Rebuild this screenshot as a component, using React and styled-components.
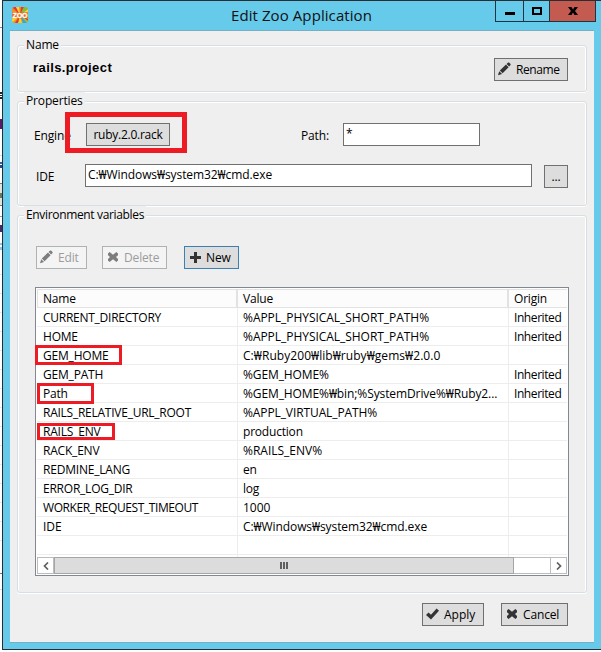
import React from 'react'
import styled, { createGlobalStyle, css } from 'styled-components'

const variables = [
    { name: 'CURRENT_DIRECTORY', value: '%APPL_PHYSICAL_SHORT_PATH%', origin: 'Inherited', nameLs: -0.26, valueLs: -0.04 },
    { name: 'HOME', value: '%APPL_PHYSICAL_SHORT_PATH%', origin: 'Inherited', valueLs: -0.04 },
    { name: 'GEM_HOME', value: 'C:₩Ruby200₩lib₩ruby₩gems₩2.0.0', valueLs: 0.06, mark: { x: -2, y: -1, w: 87, h: 20 } },
    { name: 'GEM_PATH', value: '%GEM_HOME%', origin: 'Inherited', valueLs: -0.1 },
    { name: 'Path', value: '%GEM_HOME%₩bin;%SystemDrive%₩Ruby2...', origin: 'Inherited', valueLs: -0.1, mark: { x: 0, y: -1, w: 57, h: 21 } },
    { name: 'RAILS_RELATIVE_URL_ROOT', value: '%APPL_VIRTUAL_PATH%', nameLs: -0.25, valueLs: -0.1 },
    { name: 'RAILS_ENV', value: 'production', mark: { x: 0, y: 1, w: 78, h: 17 } },
    { name: 'RACK_ENV', value: '%RAILS_ENV%', valueLs: 0 },
    { name: 'REDMINE_LANG', value: 'en' },
    { name: 'ERROR_LOG_DIR', value: 'log', nameLs: -0.23 },
    { name: 'WORKER_REQUEST_TIMEOUT', value: '1000', nameLs: -0.4, valueLs: 0 },
    { name: 'IDE', value: 'C:₩Windows₩system32₩cmd.exe', nameLs: 0, valueLs: -0.08 },
    { name: '', value: '' },
]

// slices of the window behind the dialog: [top, height, colour]
const slices = [
    [27, 1, '#888'], [92, 2, '#222'], [95, 1, '#222'], [97, 2, '#222'],
    [119, 10, '#5b1a66'], [155, 1, '#ddd'], [162, 2, '#3a5f9a'], [165, 3, '#274a86'],
    [183, 1, '#777'], [193, 5, '#6b7a5a'], [184, 21, '#e3e3dc'], [205, 1, '#777'],
    [216, 1, '#999'], [225, 7, '#4a2a66'], [243, 2, '#8cc4ee'], [247, 3, '#8cc4ee'],
    ...Array.from({ length: 15 }, (_, i) => [274 + i * 19, 1, '#e8e8e8']),
    [573, 1, '#777'], [589, 1, '#ddd'],
].map(([y, h, c]) => `linear-gradient(${c}, ${c}) 0 ${y}px / 2px ${h}px no-repeat`).join(', ')

const PencilIcon = () => (
    <Icon viewBox="1 0 14 14">
        <path d="M1 13.2l1.2-4 2.9 2.8z M2.8 8.500L9 2.600l2.600 2.600-6 6z M9.600 2l1.200-1.200c.5-.4 1-.4 1.500 0l1 1c.4.4.4 1 0 1.500l-1.200 1.200z" />
    </Icon>
)

const RemoveIcon = () => (
    <Icon viewBox="0 0 14 14">
        <path d="M3.6 2L7 4.7 10.4 2 12 3.4v1.8L10 7l2 1.900v1.700L10.4 12 7 9.3 3.6 12 2 10.6V8.900L4 7 2 5.200V3.4z" />
    </Icon>
)

const PlusIcon = () => (
    <Icon viewBox="0 0 14 14">
        <path d="M6 2h3v4h4v3H9v4H6V9H2V6h4z" />
    </Icon>
)

const CheckIcon = () => (
    <Icon viewBox="1 0 14 14">
        <path d="M1 8l2.500-2.400L6 7.800 11.600 1.600 14 3.800 6 12.600z" />
    </Icon>
)

const ZooIcon = () => (
    <Logo viewBox="0 0 16 16">
        <defs>
            <clipPath id="zoo"><rect width="16" height="16" rx="3" /></clipPath>
        </defs>
        <g clipPath="url(#zoo)">
            <rect width="16" height="16" fill="#f5901e" />
            <path d="M8 8L0 0h4z M8 8l1-8h3z" fill="#e8352e" />
            <path d="M8 8L4 0h3z M8 8l8-6v4z" fill="#ffd23c" />
            <path d="M8 8l4-8h4v2z" fill="#7ac043" />
            <path d="M8 8L0 16v-5z M8 8l2 8H6z" fill="#f7d21e" />
            <path d="M8 8l-5 8h3z M8 8l8 4v2z" fill="#e8352e" />
            <path d="M8 8l3 8h4z" fill="#2fa8dc" />
            <path d="M8 8l8 6v2h-1z" fill="#8cc63f" />
            <rect y="5" width="16" height="6.500" fill="#d9662a" opacity="0.7" />
            <text x="8" y="11" textAnchor="middle" textLength="15" lengthAdjust="spacingAndGlyphs" fill="#fff" stroke="#fff" strokeWidth="0.3" fontFamily="Liberation Sans" fontSize="8" fontWeight="bold">ZOO</text>
        </g>
    </Logo>
)

const App = () => {
    return (
        <Desktop>
            <GlobalStyle />
            <Dialog>
                <TitleBar>
                    <ZooIcon />
                    <Title>Edit Zoo Application</Title>
                    <Controls>
                        <Control $w={27}>
                            <svg width="10" height="3"><rect width="10" height="3" /></svg>
                        </Control>
                        <Control $w={25} $pad={6}>
                            <svg width="10" height="8"><path d="M0 0h10v8H0z M2 2v4h6V2z" fillRule="evenodd" /></svg>
                        </Control>
                        <Control $w={45} $pad={6} $close>
                            <svg width="10" height="8"><path d="M0 0h3.5L5 2.4 6.5 0H10L7 4l3 4H6.5L5 5.6 3.5 8H0l3-4z" /></svg>
                        </Control>
                    </Controls>
                </TitleBar>

                <Client>
                    <Group $h={47} $mt={14}>
                        <GroupTitle>Name</GroupTitle>
                        <NameRow>
                            <AppName>rails.project</AppName>
                            <Button $w={74}><PencilIcon /><Text $ls={-0.4}>Rename</Text></Button>
                        </NameRow>
                    </Group>

                    <Group $h={105} $mt={9}>
                        <GroupTitle>Properties</GroupTitle>
                        <EngineRow>
                            <Label $w={52}>Engine</Label>
                            <Marked>
                                <Button $w={84} $center><Text $ls={-0.25}>ruby.2.0.rack</Text></Button>
                                <Mark $x={-21} $y={-11} $w={122} $h={41} $b={5} />
                            </Marked>
                            <PathLabel>Path:</PathLabel>
                            <Input $w={137}>*</Input>
                        </EngineRow>
                        <IdeRow>
                            <Label $w={49}>IDE</Label>
                            <Input $w={447}><Text $ls={-0.08}>C:₩Windows₩system32₩cmd.exe</Text></Input>
                            <BrowseButton $w={24} $center>...</BrowseButton>
                        </IdeRow>
                    </Group>

                    <Group $h={378} $mt={9}>
                        <GroupTitle $ls={-0.34}>Environment variables</GroupTitle>
                        <Toolbar>
                            <Button $w={51} $disabled><PencilIcon />Edit</Button>
                            <Button $w={65} $disabled><RemoveIcon />Delete</Button>
                            <NewButton $w={55} $focused><PlusIcon />New</NewButton>
                        </Toolbar>
                        <Table>
                            <HeaderRow>
                                <HeaderCell>Name</HeaderCell>
                                <HeaderCell>Value</HeaderCell>
                                <HeaderCell>Origin</HeaderCell>
                            </HeaderRow>
                            {variables.map((v, i) => (
                                <Row key={i}>
                                    <Cell $ls={v.nameLs}>
                                        {v.name}
                                        {v.mark && <Mark $x={v.mark.x} $y={v.mark.y} $w={v.mark.w} $h={v.mark.h} $b={3} />}
                                    </Cell>
                                    <Cell $ls={v.valueLs}>{v.value}</Cell>
                                    <Cell $ls={-0.42}>{v.origin}</Cell>
                                </Row>
                            ))}
                            <CutRow><Cell /><Cell /><Cell /></CutRow>
                            <ScrollBar>
                                <ScrollButton>
                                    <svg width="6" height="8"><path d="M5 .5L1.5 4 5 7.5" fill="none" stroke="#606060" strokeWidth="1.7" /></svg>
                                </ScrollButton>
                                <Thumb><Grip /><Grip /><Grip /></Thumb>
                                <Track />
                                <ScrollButton>
                                    <svg width="6" height="8"><path d="M1 .5L4.5 4 1 7.5" fill="none" stroke="#606060" strokeWidth="1.7" /></svg>
                                </ScrollButton>
                            </ScrollBar>
                        </Table>
                    </Group>

                    <Footer>
                        <Button $w={62}><CheckIcon /><Text $ls={0}>Apply</Text></Button>
                        <Button $w={67}><RemoveIcon />Cancel</Button>
                    </Footer>
                </Client>
            </Dialog>
        </Desktop>
    )
}

const GlobalStyle = createGlobalStyle`
* {
  box-sizing: border-box;
}
body {
  margin: 0;
  background: #fff;
  font-family: "Open Sans", "Noto Sans", "Noto Sans CJK KR", sans-serif;
  font-size: 12px;
  letter-spacing: -0.15px;
  color: #000;
}
`

const Desktop = styled.div`
width: 601px;
height: 652px;
padding-left: 2px;
overflow: hidden;
background: ${slices}, #fff;
`

const Dialog = styled.div`
display: flex;
flex-direction: column;
height: 650px;
border: 1px solid #2b2d33;
border-right: 0;
background: #66caea;
`

const TitleBar = styled.div`
display: flex;
align-items: flex-start;
height: 29px;
padding: 0 5px 0 9px;
`

const Logo = styled.svg`
width: 16px;
height: 16px;
margin-top: 6px;
`

const Title = styled.div`
flex: 1;
padding-left: 80px;
text-align: center;
font-size: 15px;
line-height: 28px;
letter-spacing: 0.08px;
color: #111;
`

const Controls = styled.div`
display: flex;
height: 21px;
border-left: 1px solid #1f3440;
border-bottom: 1px solid #1f3440;
`

const Control = styled.div`
display: flex;
justify-content: center;
width: ${p => p.$w + 1}px;
padding-top: ${p => p.$pad || 11}px;
border-right: 1px solid #1f3440;
background: ${p => p.$close ? '#c35b50' : 'transparent'};
`

const Client = styled.div`
height: 613px;
margin: 0 7px;
padding: 0 7px;
border-top: 1px solid #76aec4;
border-bottom: 1px solid #76aec4;
background: #efefef;
`

const Group = styled.div`
height: ${p => p.$h}px;
margin-top: ${p => p.$mt}px;
border: 1px solid #d5dfe5;
border-radius: 3px;
box-shadow: inset 1px 1px 0 #fff, inset -1px 0 0 #fff, 0 1px 0 #fff;
`

const GroupTitle = styled.div`
width: fit-content;
height: 18px;
margin: -10px 0 0 6px;
padding: 0 2px;
line-height: 18px;
letter-spacing: ${p => p.$ls || -0.15}px;
background: #efefef;
`

const NameRow = styled.div`
display: flex;
justify-content: space-between;
margin: 4px 18px 0 15px;
`

const AppName = styled.div`
font-family: "Liberation Sans", Arial, sans-serif;
font-size: 13px;
font-weight: bold;
line-height: 19px;
letter-spacing: 0.42px;
`

const Text = styled.span`
letter-spacing: ${p => p.$ls}px;
`

const Icon = styled.svg`
flex: none;
width: 14px;
height: 14px;
margin: -2px 4px 0 0;
fill: #333;
`

const Button = styled.div`
display: flex;
align-items: center;
justify-content: ${p => p.$center ? 'center' : 'flex-start'};
flex: none;
width: ${p => p.$w}px;
height: 23px;
padding-left: ${p => p.$center ? 0 : 3}px;
border: 1px solid #707070;
line-height: 21px;
white-space: nowrap;
background: #ddd;
${p => p.$focused && css`
  border-color: #3c7fb1;
`}
${p => p.$disabled && css`
  border-color: #adb2b5;
  background: #f4f4f4;
  color: #9c9c9c;
  svg { fill: #7d7d7d; }
`}
`

const BrowseButton = styled(Button)`
margin: 1px 0 0 12px;
`

const NewButton = styled(Button)`
margin-left: 2px;
`

const EngineRow = styled.div`
display: flex;
margin: 13px 0 0 16px;
`

const IdeRow = styled.div`
display: flex;
margin: 18px 0 0 18px;
`

const Label = styled.div`
width: ${p => p.$w}px;
height: 23px;
line-height: 25px;
`

const PathLabel = styled(Label)`
width: 42px;
margin: 0 0 0 131px;
`

const Input = styled.div`
width: ${p => p.$w}px;
height: 23px;
padding-left: 2px;
border: 1px solid #707070;
line-height: 20px;
background: #fff;
`

const Marked = styled.div`
position: relative;
`

const Mark = styled.div`
position: absolute;
left: ${p => p.$x}px;
top: ${p => p.$y}px;
width: ${p => p.$w}px;
height: ${p => p.$h}px;
border: ${p => p.$b}px solid #ed1c24;
z-index: 1;
`

const Toolbar = styled.div`
display: flex;
gap: 15px;
margin: 22px 0 0 18px;
`

const Table = styled.div`
width: 534px;
height: 289px;
margin: 18px 0 0 17px;
padding: 1px;
border: 1px solid #828790;
background: #fff;
`

const Row = styled.div`
display: grid;
grid-template-columns: 201px 271px 58px;
height: 19px;
line-height: 20px;
border-bottom: 1px solid #ededed;
`

const Cell = styled.div`
position: relative;
height: 100%;
padding-left: 5px;
border-right: 1px solid #ededed;
letter-spacing: ${p => p.$ls ?? -0.2}px;
white-space: nowrap;
&:first-child {
  padding-left: 6px;
}
&:last-child {
  border-right: 0;
}
`

const HeaderRow = styled(Row)`
grid-template-rows: 17px;
border-top: 1px solid #e2e2e2;
border-bottom-color: #e2e2e2;
background: #fcfcfc;
`

const HeaderCell = styled(Cell)`
border-right: 2px solid #e2e2e2;
line-height: 17px;
&:first-child {
  border-left: 1px solid #e2e2e2;
  padding-left: 5px;
}
`

const CutRow = styled(Row)`
height: 2px;
border-bottom: 0;
`

const ScrollBar = styled.div`
display: flex;
height: 17px;
`

const ScrollButton = styled.div`
display: flex;
align-items: center;
justify-content: center;
width: 17px;
border: 1px solid #bcbcbc;
background: #fff;
`

const Thumb = styled.div`
display: flex;
align-items: center;
justify-content: center;
gap: 1px;
width: 460px;
border: 1px solid #a6a6a6;
background: #dcdcdc;
`

const Grip = styled.div`
width: 2px;
height: 7px;
background: #606060;
`

const Track = styled.div`
flex: 1;
border: solid #bcbcbc;
border-width: 1px 0;
background: #fff;
`

const Footer = styled.div`
display: flex;
justify-content: flex-end;
gap: 17px;
margin: 10px 19px 0 0;
`

export default App
